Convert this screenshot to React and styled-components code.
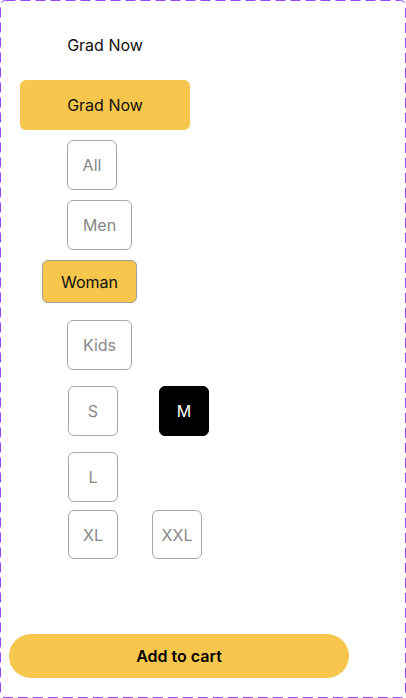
import React from 'react';
import styled, { createGlobalStyle } from 'styled-components';

const GlobalStyle = createGlobalStyle`
  html, body {
    margin: 0;
    padding: 0;
    background: #ffffff;
  }
  body {
    font-family: Inter, "Noto Sans", "Liberation Sans", sans-serif;
  }
`;

const Frame = styled.div`
  position: relative;
  width: 406px;
  height: 698px;
  box-sizing: border-box;
  padding-top: 20px;
  display: flex;
  flex-direction: column;
  align-items: flex-start;
`;

const DashedEdge = styled.svg`
  position: absolute;
  inset: 0;
  pointer-events: none;
`;

const Row = styled.div`
  display: flex;
  align-items: center;
  margin-top: ${(props) => props.$top || 0}px;
  margin-left: ${(props) => props.$left || 0}px;
  gap: ${(props) => props.$gap || 0}px;
`;

const GradButton = styled.button`
  width: 170px;
  height: 50px;
  border: none;
  border-radius: 6px;
  background: ${(props) => (props.$filled ? '#f7c64c' : 'transparent')};
  color: #111111;
  font-family: inherit;
  font-size: 16px;
  font-weight: 400;
  padding: 0;
`;

const Chip = styled.button`
  box-sizing: border-box;
  width: ${(props) => props.$w || 50}px;
  height: ${(props) => props.$h || 50}px;
  border: 1px solid ${(props) => (props.$active ? '#000000' : '#a9a9a9')};
  border-radius: 6px;
  background: ${(props) => (props.$active ? '#000000' : '#ffffff')};
  color: ${(props) => (props.$active ? '#ffffff' : '#888888')};
  font-family: inherit;
  font-size: 16px;
  font-weight: 400;
  padding: 0;
`;

const SelectedChip = styled(Chip)`
  border-color: #9e9e9e;
  background: #f7c64c;
  color: #111111;
`;

const CartButton = styled.button`
  width: 340px;
  height: 44px;
  border: none;
  border-radius: 22px;
  background: #f7c64c;
  color: #000000;
  font-family: inherit;
  font-size: 16px;
  font-weight: 600;
  padding: 0;
`;

function App() {
  return (
    <>
      <GlobalStyle />
      <Frame>
        <DashedEdge width="406" height="698">
          <rect x="0.5" y="0.5" width="405" height="697" rx="5" fill="none" stroke="#9747ff" strokeWidth="1" strokeDasharray="10 5" />
        </DashedEdge>

        <Row $left={20}>
          <GradButton>Grad Now</GradButton>
        </Row>
        <Row $top={10} $left={20}>
          <GradButton $filled>Grad Now</GradButton>
        </Row>

        <Row $top={10} $left={67}>
          <Chip>All</Chip>
        </Row>
        <Row $top={10} $left={67}>
          <Chip $w={65}>Men</Chip>
        </Row>
        <Row $top={10} $left={42}>
          <SelectedChip $w={95} $h={43}>Woman</SelectedChip>
        </Row>
        <Row $top={17} $left={67}>
          <Chip $w={65}>Kids</Chip>
        </Row>

        <Row $top={16} $left={68} $gap={41}>
          <Chip>S</Chip>
          <Chip $active>M</Chip>
        </Row>
        <Row $top={16} $left={68}>
          <Chip>L</Chip>
        </Row>
        <Row $top={8} $left={68} $gap={34}>
          <Chip $h={49}>XL</Chip>
          <Chip $h={49}>XXL</Chip>
        </Row>

        <Row $top={75} $left={9}>
          <CartButton>Add to cart</CartButton>
        </Row>
      </Frame>
    </>
  );
}

export default App;
